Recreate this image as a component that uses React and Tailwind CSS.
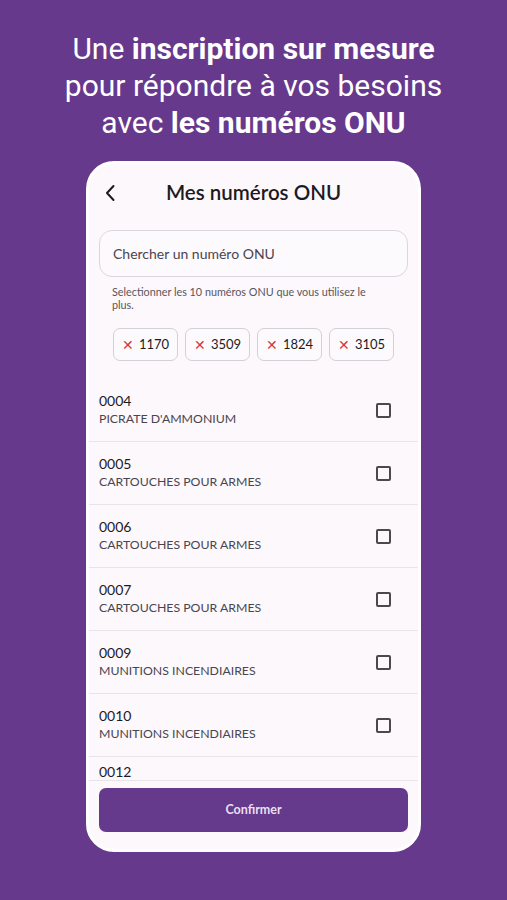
import React from "react";

const chips = ["1170", "3509", "1824", "3105"];
const rows = [
  ["0004", "PICRATE D'AMMONIUM"],
  ["0005", "CARTOUCHES POUR ARMES"],
  ["0006", "CARTOUCHES POUR ARMES"],
  ["0007", "CARTOUCHES POUR ARMES"],
  ["0009", "MUNITIONS INCENDIAIRES"],
  ["0010", "MUNITIONS INCENDIAIRES"],
];

function Row({ num, label }) {
  return (
    <div className="h-[63px] shrink-0 flex items-center justify-between pl-[10px] pr-[27px] border-b border-[#e8e4e8]">
      <div className="flex flex-col -mt-[2px]">
        <span className="text-[14px] leading-[19px] text-[#1c1b1f]">{num}</span>
        <span className="text-[12.3px] leading-[18px] text-[#49454f]">{label}</span>
      </div>
      <div className="w-[15px] h-[15px] border-2 border-[#4a4a4a] rounded-[2px]" />
    </div>
  );
}

export default function App() {
  return (
    <div className="w-[507px] h-[900px] bg-[#66398c] flex flex-col items-center overflow-hidden">
      <h1
        className="mt-[30px] text-white text-center text-[30px] leading-[37px]"
        style={{ fontFamily: "Roboto, sans-serif" }}
      >
        Une <b className="font-bold">inscription sur mesure</b>
        <br />
        pour répondre à vos besoins
        <br />
        avec <b className="font-bold">les numéros ONU</b>
      </h1>

      <div
        className="mt-[20px] w-[335px] h-[691px] rounded-[28px] bg-[#fcf8fc] border-[3px] border-white flex flex-col overflow-hidden"
        style={{ fontFamily: "Lato, sans-serif" }}
      >
        <div className="h-[57px] shrink-0 flex items-center relative">
          <svg className="absolute left-[15px] top-[20px]" width="12" height="18" viewBox="0 0 12 18" fill="none">
            <path d="M9.5 2 L3 9 L9.5 16" stroke="#1c1b1f" strokeWidth="2" strokeLinecap="round" strokeLinejoin="round" />
          </svg>
          <div className="w-full text-center text-[20.5px] font-semibold text-[#1c1b1f]">Mes numéros ONU</div>
        </div>

        <div className="px-[10px] pt-[9px]">
          <div className="h-[47px] rounded-[13px] border border-[#dcd6dc] bg-[#fdfafd] flex items-center px-[13px] text-[14px] text-[#49454f]">
            Chercher un numéro ONU
          </div>
          <p className="mt-[8px] pl-[13px] pr-[20px] text-[10.8px] leading-[13px] text-[#5a565d]">
            Selectionner les 10 numéros ONU que vous utilisez le plus.
          </p>
          <div className="mt-[17px] px-[14px] flex gap-[7px]">
            {chips.map((c) => (
              <div
                key={c}
                className="w-[65px] h-[33px] rounded-[7px] border border-[#d6d0d6] bg-[#fdfafd] flex items-center justify-center gap-[5px] text-[13px] text-[#1c1b1f]"
              >
                <span className="text-[#d9363e] text-[14px] leading-none">✕</span>
                {c}
              </div>
            ))}
          </div>
        </div>

        <div className="mt-[18px] h-[402px] shrink-0 flex flex-col overflow-hidden border-b border-[#e8e4e8]">
          {rows.map(([n, l]) => (
            <Row key={n} num={n} label={l} />
          ))}
          <div className="shrink-0 pl-[10px] pt-[2px]">
            <span className="text-[14px] leading-[19px] text-[#1c1b1f]">0012</span>
          </div>
        </div>

        <div className="px-[10px] pt-[7px]">
          <button className="w-full h-[44px] rounded-[7px] bg-[#65398b] text-[#eadff2] text-[12.5px] font-bold">
            Confirmer
          </button>
        </div>
      </div>
    </div>
  );
}
